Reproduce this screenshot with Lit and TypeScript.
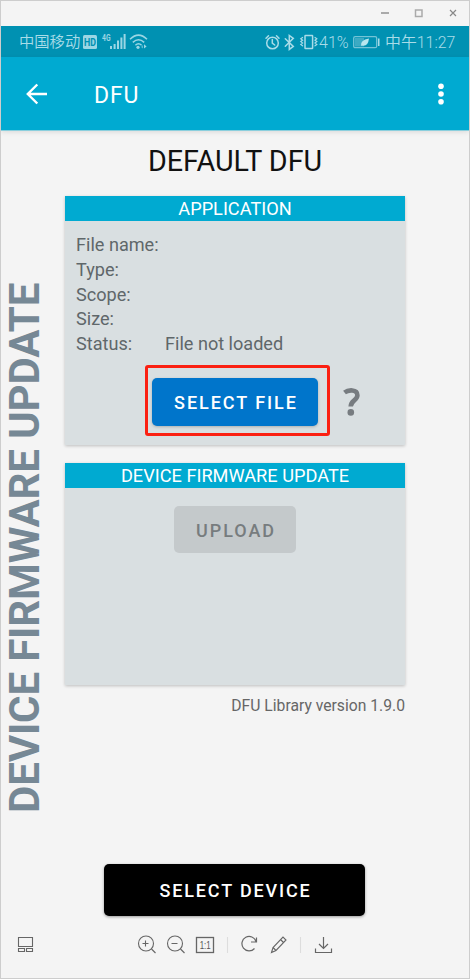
import { LitElement, html, css, svg } from "lit";
import { customElement } from "lit/decorators.js";

const statusLeft = svg`
  <rect x="83" y="9" width="14" height="14" rx="1.5" fill="#9bd6e4"/>
  <text x="84" y="19.8" class="hd" textLength="12" lengthAdjust="spacingAndGlyphs">HD</text>
  <text x="102" y="15.2" class="net" textLength="8.5" lengthAdjust="spacingAndGlyphs">4G</text>
  <g fill="#9bd6e4">
    <rect x="110" y="20" width="2" height="3"/><rect x="113.6" y="18" width="2" height="5"/>
    <rect x="117" y="14.5" width="2" height="8.5"/><rect x="120.4" y="11.5" width="2" height="11.5"/>
    <rect x="123.6" y="8" width="2" height="15"/>
  </g>
  <g fill="none" stroke="#9bd6e4" stroke-width="1.5">
    <path d="M130 13.2Q138.5 5 147 13.2"/><path d="M132.8 16.4Q138.5 11 144.2 16.4"/><path d="M135.4 19.2Q138.5 16.4 141.6 19.2"/>
  </g>
  <circle cx="138" cy="21.3" r="1.6" fill="#9bd6e4"/>
  <path d="M144 18.2l2.6 2.2-2.6 2.2z M142.6 19v3.6l-1.2-1.6z" fill="#9bd6e4"/>`;

const statusRight = svg`
  <g fill="none" stroke="#a9dce8" stroke-width="1.5" stroke-linecap="round">
    <circle cx="8.5" cy="17" r="5.8"/><path d="M8.3 13.5v3.7l2.4 1.8M2 12.2l2.5-2.5M15 12.2l-2.5-2.5"/>
    <path d="M21.3 12.8l8 7.6-4 3v-14l4 3-8 7.8"/>
    <rect x="41" y="9.6" width="7.6" height="13" rx=".5"/>
    <path d="M38.6 11.5l-1.8 1.3 1.8 1.4-1.8 1.4 1.8 1.4-1.8 1.4 1.8 1.4M51 11.5l1.8 1.3-1.8 1.4 1.8 1.4-1.8 1.4 1.8 1.4-1.8 1.4" stroke-width="1.2"/>
  </g>`;

@customElement("app-root")
export class AppRoot extends LitElement {
  static styles = css`
    :host { display: block; font-family: Roboto, "Noto Sans CJK SC", sans-serif; }
    * { box-sizing: border-box; }
    svg { display: block; }
    .window { width: 470px; height: 979px; background: #f4f4f4; border: 1px solid #cdcdcd; display: flex; flex-direction: column; overflow: hidden; }
    .caption { height: 25px; flex: none; display: flex; justify-content: flex-end; padding-right: 12px; }
    .status { height: 31px; flex: none; background: #0091b2; color: #a9dce8; display: flex; align-items: center; justify-content: space-between; padding: 0 14px 0 18px; font-size: 16px; line-height: 31px; white-space: nowrap; }
    .carrier, .indicators { display: flex; align-items: center; }
    .carrier span { width: 63px; font-size: 15.3px; padding-top: 2px; }
    .cn { font-weight: 350; }
    .hd { font: 700 10.5px Roboto, sans-serif; fill: #0091b2; }
    .net { font: 700 9.5px Roboto, sans-serif; fill: #9bd6e4; }
    .pct { width: 34px; padding-top: 1px; font-size: 16px; font-weight: 350; }
    .clock { width: 70px; padding-top: 1px; font-size: 15.9px; font-weight: 350; }
    .appbar { height: 73px; flex: none; background: #00aad1; color: #fff; display: flex; align-items: center; padding: 1px 24px 0 23px; box-shadow: 0 1px 0 #8bcfdd, 0 2px 5px #0000001c; }
    .appbar h1 { margin: 0 auto 0 44px; font-size: 23px; font-weight: 400; letter-spacing: .8px; padding-top: 2px; }
    .content { flex: 1; display: grid; grid-template-columns: 64px 340px; grid-template-rows: 734px 1fr; }
    .side { writing-mode: vertical-rl; transform: rotate(180deg); color: #768895; font-size: 42px; font-weight: 700; line-height: 48px; width: 48px; padding-top: 51px; white-space: nowrap; letter-spacing: -.14px; }
    .main { display: flex; flex-direction: column; }
    .title { margin: 13px 0 16px; text-align: center; color: #111; font-size: 28.7px; line-height: 37px; font-weight: 400; }
    .card { background: #d9dfe1; box-shadow: 0 1px 3px #00000038; flex: none; }
    .first { height: 249px; margin-bottom: 18px; }
    .second { height: 222px; }
    .head { height: 25px; background: #00aad1; color: #fff; text-align: center; font-size: 18.2px; line-height: 26px; margin: 0; font-weight: 400; }
    .fields { margin: 0; padding: 11px 0 0 11px; display: grid; grid-template-columns: 89px 1fr; grid-auto-rows: 24.8px; color: #5f676a; font-size: 18.1px; line-height: 25px; white-space: nowrap; }
    .fields dt, .fields dd { margin: 0; }
    .actions { display: flex; align-items: center; padding: 9px 0 0 80px; gap: 12px; }
    .mark { border: 3px solid #fb2012; border-radius: 3px; width: 185px; height: 71px; display: flex; align-items: center; padding: 3px 0 0 4px; }
    .btn { font: 500 18px/48px Roboto, sans-serif; letter-spacing: 1.95px; border: 0; border-radius: 5px; padding: 0 0 0 2px; color: #fff; text-align: center; }
    .blue { width: 166px; height: 48px; line-height: 49px; background: #0075cb; box-shadow: 0 1px 3px #00000038; }
    .grey { display: block; width: 122px; height: 47px; line-height: 49px; margin: 18px auto 0 109px; background: #c4c9cb; color: #777c7e; }
    .black { width: 261px; height: 52px; line-height: 53px; margin-left: 103px; background: #000; box-shadow: 0 1px 3px #00000060; display: block; letter-spacing: 1.85px; }
    .version { color: #666; font-size: 15.7px; line-height: 20px; text-align: right; margin-top: 11px; white-space: nowrap; }
    .footer { grid-column: 1 / 3; }
    .tools { display: block; margin-top: 13px; }
    .ratio { font: 500 10.5px "Liberation Sans", sans-serif; fill: #555; }
    .question { margin-top: 4px; }
  `;

  render() {
    return html`
      <div class="window">
        <div class="caption">
          <svg width="80" height="25" viewBox="0 0 80 25" fill="none" stroke="#aaa">
            <path d="M4 12h8" stroke-width="2"/><rect x="38.5" y="9" width="6.5" height="6.5" stroke-width="1.5"/>
            <path d="M73 9l6 6M79 9l-6 6" stroke="#888" stroke-width="1.2"/>
          </svg>
        </div>
        <div class="status">
          <div class="carrier">
            <span class="cn">中国移动</span>
            <svg width="68" height="31" viewBox="82 0 68 31">${statusLeft}</svg>
          </div>
          <div class="indicators">
            <svg width="55" height="31" viewBox="0 0 55 31">${statusRight}</svg>
            <span class="pct">41%</span>
            <svg width="27" height="31" viewBox="0 0 27 31">
              <rect x=".7" y="10.7" width="23" height="11" rx="1.5" fill="none" stroke="#74c4d7" stroke-width="1.3"/>
              <rect x="2" y="12" width="9" height="8.5" fill="#3caac3"/>
              <path d="M8 20Q7 14 16 12.5Q15 21 8.8 19.5z" fill="#b9e6ee"/>
              <rect x="25" y="12.5" width="1.5" height="7.5" fill="#a9dce8"/>
            </svg>
            <svg width="5" height="31"></svg>
            <span class="clock">中午11:27</span>
          </div>
        </div>
        <div class="appbar">
          <svg width="26" height="26" viewBox="0 0 26 26" fill="none" stroke="#fff" stroke-width="2.4"><path d="M23 13H4M13.3 3.5L3.8 13l9.5 9.5"/></svg>
          <h1>DFU</h1>
          <svg width="8" height="26" viewBox="0 0 8 26" fill="#fff"><circle cx="4" cy="5.2" r="2.8"/><circle cx="4" cy="13" r="2.8"/><circle cx="4" cy="20.8" r="2.8"/></svg>
        </div>
        <div class="content">
          <div class="side">DEVICE FIRMWARE UPDATE</div>
          <div class="main">
            <h2 class="title">DEFAULT DFU</h2>
            <section class="card first">
              <h3 class="head">APPLICATION</h3>
              <dl class="fields">
                <dt>File name:</dt><dd></dd>
                <dt>Type:</dt><dd></dd>
                <dt>Scope:</dt><dd></dd>
                <dt>Size:</dt><dd></dd>
                <dt>Status:</dt><dd>File not loaded</dd>
              </dl>
              <div class="actions">
                <div class="mark"><button class="btn blue">SELECT FILE</button></div>
                <svg class="question" width="20" height="32" viewBox="0 0 20 32">
                  <path d="M2.5 6.5C6 3.8 15.4 2.8 15.4 9.2C15.4 14.6 8.7 14.2 8.7 20.6" fill="none" stroke="#777c80" stroke-width="4.6"/>
                  <circle cx="8.8" cy="26.4" r="3.3" fill="#777c80"/>
                </svg>
              </div>
            </section>
            <section class="card second">
              <h3 class="head">DEVICE FIRMWARE UPDATE</h3>
              <button class="btn grey">UPLOAD</button>
            </section>
            <div class="version">DFU Library version 1.9.0</div>
          </div>
          <div class="footer">
            <button class="btn black">SELECT DEVICE</button>
            <svg class="tools" width="400" height="32" viewBox="1 930 400 32" fill="none" stroke="#666" stroke-width="1.1">
              <path d="M18.5 938.5h14v9h-14zM18.5 949.5h6v3h-6zM26.5 949.5h6v3h-6z"/>
              <circle cx="146" cy="944.5" r="7.5"/><path d="M151.5 950l4 4M142.5 944.5h6M145.5 941.5v6"/>
              <circle cx="175" cy="944.5" r="7.5"/><path d="M180.5 950l4 4M171.5 944.5h6"/>
              <rect x="196.5" y="938.5" width="17" height="15" stroke-width="1.3"/>
              <text x="199.7" y="950" class="ratio" stroke="none" textLength="11" lengthAdjust="spacingAndGlyphs">1:1</text>
              <path d="M227.5 938v16M300.5 938v16" stroke="#ddd"/>
              <path d="M254.5 949.5A7.2 7.2 0 1 1 256 942.5M256.5 938.5v4.5h-5.5" stroke-width="1.2"/>
              <path d="M271.5 953.5l1.5-5 10-10.5 3 3-10 10.5zM280.5 940.5l3 3M273 948.5l3 3"/>
              <path d="M323.5 938v11M319 945l4.5 4.5 4.5-4.5M315.5 949.5v4h16v-4" stroke-width="1.2"/>
            </svg>
          </div>
        </div>
      </div>`;
  }
}
